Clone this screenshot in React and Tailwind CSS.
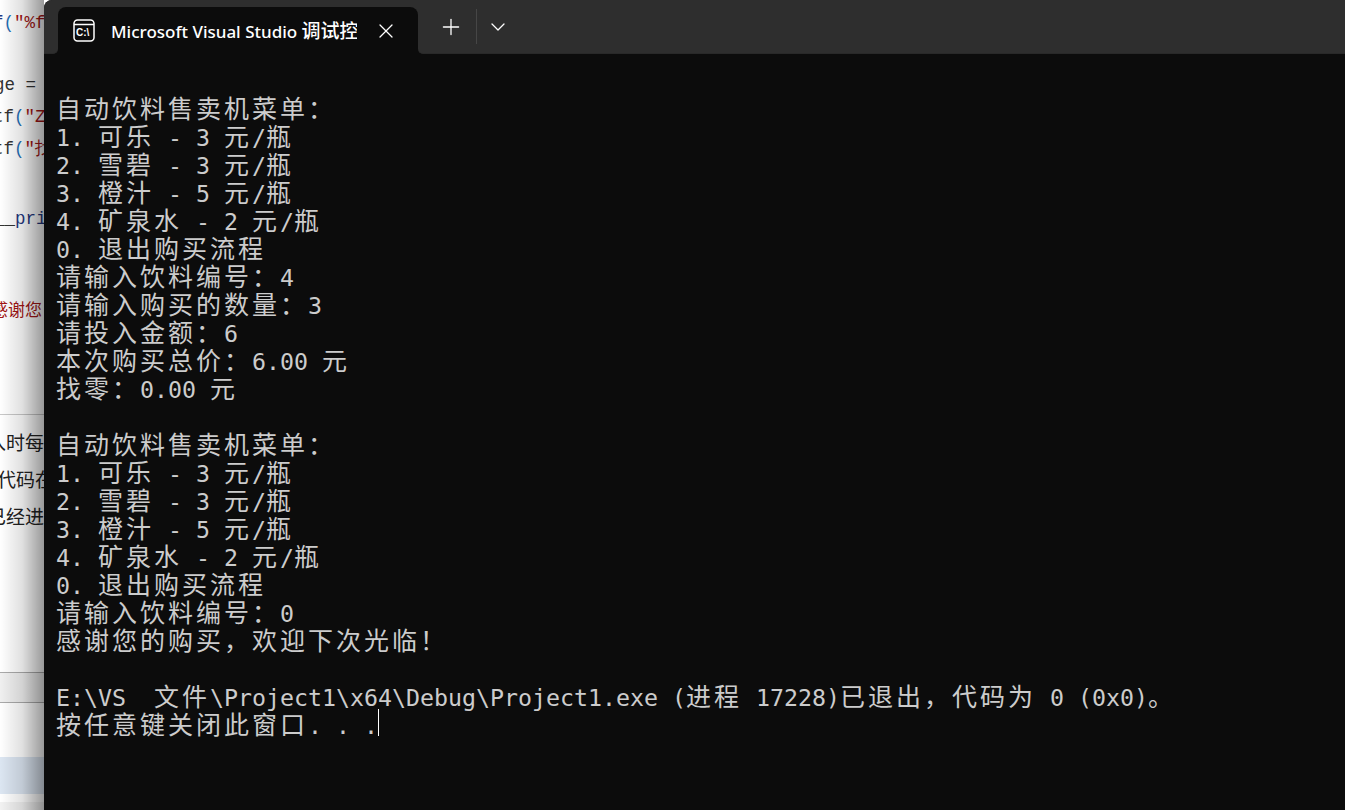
import { ChevronDown, Plus, X } from "lucide-react"

const lines = [
  "自动饮料售卖机菜单：",
  "1. 可乐 - 3 元/瓶",
  "2. 雪碧 - 3 元/瓶",
  "3. 橙汁 - 5 元/瓶",
  "4. 矿泉水 - 2 元/瓶",
  "0. 退出购买流程",
  "请输入饮料编号：4",
  "请输入购买的数量：3",
  "请投入金额：6",
  "本次购买总价：6.00 元",
  "找零：0.00 元",
  "",
  "自动饮料售卖机菜单：",
  "1. 可乐 - 3 元/瓶",
  "2. 雪碧 - 3 元/瓶",
  "3. 橙汁 - 5 元/瓶",
  "4. 矿泉水 - 2 元/瓶",
  "0. 退出购买流程",
  "请输入饮料编号：0",
  "感谢您的购买，欢迎下次光临！",
  "",
  "E:\\VS  文件\\Project1\\x64\\Debug\\Project1.exe (进程 17228)已退出，代码为 0 (0x0)。",
]

// wide characters take two terminal cells, so they get their own run
const TermLine = ({ text, children }) => {
  const runs = text.split(/([\u2E80-\uFFEF]+)/).filter(Boolean)
  return (
    <div className="h-[28px] whitespace-pre leading-[28px]">
      {runs.map((run, i) =>
        /[\u2E80-\uFFEF]/.test(run) ? (
          <span key={i} className="text-[25px] tracking-[3px] font-['Noto_Sans_CJK_SC',sans-serif]">
            {run}
          </span>
        ) : (
          <span key={i}>{run}</span>
        )
      )}
      {children}
    </div>
  )
}

const BackdropCode = () => (
  <div className="absolute inset-y-0 left-0 w-[60px] overflow-hidden bg-white">
    <div className="h-[414px] whitespace-pre pt-[13px] font-['Liberation_Mono',monospace] text-[17.5px] leading-[20px]">
      <div className="-ml-[7px] text-[#1f377f]">
        f<span className="text-[#1f6fb5]">(</span>
        <span className="text-[#a31515]">"%f</span>
      </div>
      <div className="mt-[42px] -ml-[6px] text-[#333]">ge =</div>
      <div className="mt-[12px] -ml-[7px] text-[#333]">
        tf<span className="text-[#1f6fb5]">(</span>
        <span className="text-[#a31515]">"Z</span>
      </div>
      <div className="mt-[12px] -ml-[7px] text-[#333]">
        tf<span className="text-[#1f6fb5]">(</span>
        <span className="text-[#a31515]">"找</span>
      </div>
      <div className="mt-[50px] -ml-[6px] text-[#333]">
        __<span className="text-[#1f377f]">pri</span>
      </div>
      <div className="mt-[70px] -ml-[9px] font-['Noto_Sans_CJK_SC',sans-serif] text-[17px] text-[#a31515]">感谢您</div>
    </div>
    <div className="h-[258px] border-t border-[#c8c8c8] pt-[8px] font-['Noto_Sans_CJK_SC',sans-serif] text-[19px] leading-[37px] text-[#222]">
      <div className="-ml-[13px] whitespace-pre">入时每</div>
      <div className="-ml-[3px] whitespace-pre">代码在</div>
      <div className="-ml-[13px] whitespace-pre">已经进</div>
    </div>
    <div className="h-[30px] border-t border-[#aaa] bg-[#f0f0f0]" />
    <div className="h-[55px] border-t border-[#aaa]" />
    <div className="h-[37px] bg-[#dce6f2]" />
    <div className="h-[8px]" />
    <div className="h-[8px] bg-[#f2f2f2]" />
    <div className="absolute inset-0 w-[44px] bg-linear-to-r from-black/0 via-black/12 to-black/40" />
  </div>
)

const App = () => {
  return (
    <div className="relative h-[810px] w-[1345px] overflow-hidden bg-white pl-[44px]">
      <BackdropCode />
      <div className="relative flex h-full flex-col overflow-hidden rounded-tl-[8px] bg-[#0c0c0c]">
        <header className="flex h-[54px] shrink-0">
          <div className="w-[14px] rounded-br-[5px] border-b border-[#292929] bg-[#2e2e2e]" />
          <div className="w-[360px] bg-[#2e2e2e] pt-[7px]">
            <div className="flex h-[47px] items-center rounded-t-[8px] bg-[#0c0c0c] pl-[15px] text-white">
              <svg width="22" height="23" viewBox="0 0 22 23" fill="none" className="shrink-0">
                <rect x="1" y="1" width="20" height="21" rx="3.5" stroke="white" strokeWidth="1.5" />
                <path d="M1 5.5H21" stroke="white" strokeWidth="1.5" />
                <text x="3" y="17" fill="white" fontSize="10" fontWeight="700" fontFamily="'Liberation Sans', sans-serif">
                  C:\
                </text>
              </svg>
              <div className="ml-[16px] mt-[1px] w-[246px] overflow-hidden whitespace-nowrap font-['Noto_Sans','Noto_Sans_CJK_SC',sans-serif] text-[17px] font-medium">
                Microsoft Visual Studio <span className="text-[19px]">调试控制台</span>
              </div>
              <X size={24} strokeWidth={1.3} className="ml-[17px]" />
            </div>
          </div>
          <div className="flex flex-1 items-center rounded-bl-[5px] border-b border-[#292929] bg-[#2e2e2e] pl-[20px] text-white">
            <Plus size={26} strokeWidth={1.2} />
            <div className="ml-[12px] h-[35px] w-px bg-[#464646]" />
            <ChevronDown size={24} strokeWidth={1.3} className="ml-[9px]" />
          </div>
        </header>
        <main className="pl-[12px] pt-[39px] font-['DejaVu_Sans_Mono',monospace] text-[23.25px] text-[#cccccc]">
          {lines.map((line, i) => (
            <TermLine key={i} text={line} />
          ))}
          <TermLine text="按任意键关闭此窗口. . .">
            <span className="inline-block h-[27px] w-px bg-white align-top" />
          </TermLine>
        </main>
      </div>
    </div>
  )
}

export default App
